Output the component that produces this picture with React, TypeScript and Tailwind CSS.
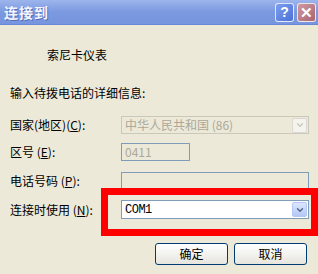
import { ChevronDown } from "lucide-react";

const font = { fontFamily: '"SimSun", "Noto Sans CJK SC", "Liberation Sans", sans-serif' };

function Label({ text, keyChar, gap }: { text: string; keyChar: string; gap?: boolean }) {
  return (
    <span className="w-[111px] shrink-0 text-[12px] leading-[16px] text-black whitespace-nowrap">
      {text}
      {gap ? " " : ""}
      (<span className="underline">{keyChar}</span>):
    </span>
  );
}

function DropButton({ disabled }: { disabled?: boolean }) {
  return disabled ? (
    <div className="w-[15px] h-[15px] mr-[1px] flex items-center justify-center rounded-[2px] border border-[#dcdad0] bg-[#f4f3ee]">
      <ChevronDown className="w-[10px] h-[10px] text-[#c9c7ba]" strokeWidth={3} />
    </div>
  ) : (
    <div className="w-[15px] h-[15px] mr-[1px] flex items-center justify-center rounded-[2px] border border-[#b5c8f5] bg-gradient-to-b from-[#dce6fd] to-[#b3c8f6]">
      <ChevronDown className="w-[10px] h-[10px] text-[#4d6185]" strokeWidth={3} />
    </div>
  );
}

export default function App() {
  return (
    <div className="relative w-[318px] h-[274px] bg-[#ece9d8] overflow-hidden" style={font}>
      <div className="h-[25px] flex items-center justify-between pl-[4px] pr-[2px] bg-gradient-to-b from-[#9db5ec] via-[#7b99e0] to-[#7794de] border-b border-[#6b88d6]">
        <span className="text-[#f4f6ff] font-bold text-[14px] tracking-[1px] [text-shadow:1px_1px_0_#5670b8]">连接到</span>
        <div className="flex gap-[3px]">
          <div className="w-[19px] h-[19px] rounded-[3px] border border-white/80 bg-gradient-to-br from-[#7d9ff0] to-[#4a70d8] flex items-center justify-center text-white font-bold text-[14px] leading-none" style={{ fontFamily: '"Liberation Sans", sans-serif' }}>
            ?
          </div>
          <div className="w-[19px] h-[19px] rounded-[3px] border border-white/80 bg-gradient-to-br from-[#d09aa2] to-[#a8646f] flex items-center justify-center text-white font-bold text-[15px] leading-none" style={{ fontFamily: '"Liberation Sans", sans-serif' }}>
            ✕
          </div>
        </div>
      </div>

      <div className="flex flex-col pl-[10px] pr-[9px]">
        <div className="mt-[22px] pl-[37px] text-[12px] leading-[16px]">索尼卡仪表</div>
        <div className="mt-[22px] text-[12px] leading-[16px]">输入待拨电话的详细信息:</div>

        <div className="mt-[15px] flex items-center h-[18px]">
          <Label text="国家(地区)" keyChar="C" />
          <div className="flex-1 h-[18px] flex items-center border border-[#cac8bb] bg-[#ece9d8]">
            <span className="flex-1 pl-[3px] text-[12px] leading-[16px] text-[#aca899]">中华人民共和国 (86)</span>
            <DropButton disabled />
          </div>
        </div>

        <div className="mt-[9px] flex items-center h-[18px]">
          <Label text="区号" keyChar="E" gap />
          <div className="w-[69px] h-[18px] flex items-center border border-[#7f9db9] pl-[3px] text-[12px] text-[#aca899]">
            0411
          </div>
        </div>

        <div className="mt-[11px] flex items-center h-[18px]">
          <Label text="电话号码" keyChar="P" gap />
          <div className="flex-1 h-[18px] border border-[#7f9db9]" />
        </div>

        <div className="mt-[10px] flex items-center h-[19px]">
          <Label text="连接时使用" keyChar="N" gap />
          <div className="flex-1 h-[19px] flex items-center border border-[#7f9db9] bg-white">
            <span className="flex-1 pl-[3px] text-[12px] leading-[16px] text-black tracking-[-0.5px]" style={{ fontFamily: '"Liberation Mono", monospace' }}>COM1</span>
            <DropButton />
          </div>
        </div>

        <div className="mt-[24px] flex justify-end gap-[6px] pr-[2px]">
          <button className="w-[73px] h-[22px] rounded-[3px] border border-[#003c74] bg-gradient-to-b from-white to-[#e6e5de] text-[12px] text-black">
            确定
          </button>
          <button className="w-[73px] h-[22px] rounded-[3px] border border-[#003c74] bg-gradient-to-b from-white to-[#e6e5de] text-[12px] text-black">
            取消
          </button>
        </div>
      </div>

      <div className="absolute left-[101px] top-[188px] w-[217px] h-[48px] border-[7px] border-[#ff0000] pointer-events-none" />
    </div>
  );
}
